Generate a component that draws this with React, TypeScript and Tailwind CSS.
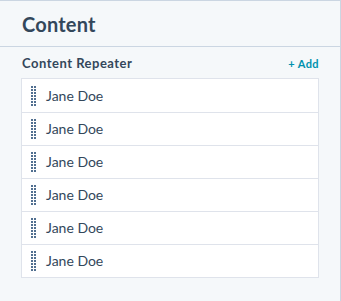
import React from "react";

function Handle() {
  const rows = [0, 1, 2, 3, 4, 5, 6];
  return (
    <svg width="6" height="20" viewBox="0 0 6 20" className="shrink-0">
      {rows.map((r) => (
        <g key={r}>
          <rect x="0" y={r * 3} width="2" height="2" fill="#516f90" />
          <rect x="3" y={r * 3} width="2" height="2" fill="#516f90" />
        </g>
      ))}
    </svg>
  );
}

export default function App() {
  const items = Array.from({ length: 6 }, () => "Jane Doe");
  return (
    <div
      className="w-[341px] h-[301px] bg-[#f5f8fa] border-t border-r border-[#cbd6e2] text-[#33475b]"
      style={{ fontFamily: "Lato, 'Open Sans', sans-serif" }}
    >
      <div className="h-[46px] border-b border-[#cbd6e2] flex items-center px-[22px]">
        <h1 className="text-[20px] font-bold leading-none tracking-[0.2px]">Content</h1>
      </div>
      <div className="pl-[21px] pr-[21px]">
        <div className="flex items-center justify-between h-[31px] pt-[3px] pl-[1px]">
          <span className="text-[13px] font-bold tracking-[0.5px]">Content Repeater</span>
          <span className="text-[11px] font-bold text-[#0091ae] pr-[0px] tracking-[0.4px]">+ Add</span>
        </div>
        <div className="border border-[#dfe3eb] bg-white">
          {items.map((name, i) => (
            <div
              key={i}
              className={`flex items-center h-[33px] pl-[9px] gap-[9px] ${i > 0 ? "border-t border-[#dfe3eb]" : ""}`}
            >
              <Handle />
              <span className="text-[14px] leading-none">{name}</span>
            </div>
          ))}
        </div>
      </div>
    </div>
  );
}
